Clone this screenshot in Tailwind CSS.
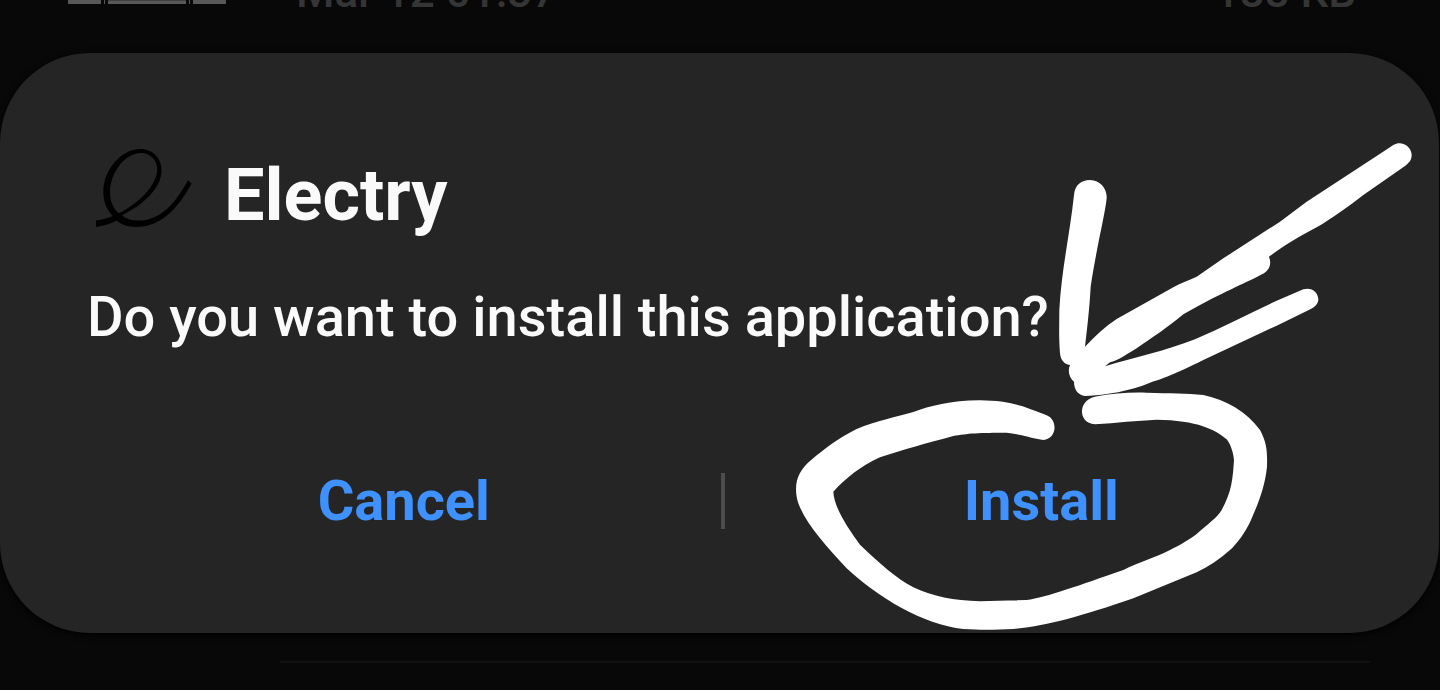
<!DOCTYPE html>
<html lang="en">
<head>
<meta charset="utf-8">
<meta name="viewport" content="width=device-width, initial-scale=1">
<title>Electry</title>
<script src="https://cdn.jsdelivr.net/npm/@tailwindcss/browser@4"></script>
</head>
<body class="min-h-screen overflow-hidden bg-[#080808] font-['Roboto','Noto_Sans',sans-serif]">

  <!-- File row behind the dialog, scrolled almost out of view -->
  <div class="flex h-[53px] items-start pr-[84px] pl-[68px] text-[44px] leading-[48px] font-medium text-[#353535]" aria-hidden="true">
    <div class="flex h-1 w-[158px] gap-[3px]">
      <span class="w-[33px] bg-[#585858]"></span>
      <span class="w-px bg-[#585858]"></span>
      <span class="flex-1 border-t border-[#404040] bg-[#585858]"></span>
      <span class="w-px bg-[#585858]"></span>
      <span class="w-[33px] bg-[#585858]"></span>
    </div>
    <div class="-mt-8 ml-[70px] flex flex-1 justify-between">
      <span>Mar 12 01:37</span>
      <span>188 KB</span>
    </div>
  </div>

  <main role="dialog" aria-labelledby="title" aria-describedby="question" class="relative mr-px rounded-[90px] bg-[#252525] pt-24 pr-[81px] pb-[84px] pl-[87px] shadow-[0_2px_6px_#000]">
    <header class="flex items-start gap-8">
      <svg class="ml-[9px] h-[78px] w-24 shrink-0" viewBox="50 57 287 233" fill="#000" fill-rule="evenodd" aria-hidden="true">
        <path d="M50 271C70 268 85 264 100 257C82 240 72 215 72 185C72 120 125 57 183 57C220 57 246 85 246 120C246 175 190 225 128 255C140 266 155 271 175 271C245 271 290 215 325 150L336 160C300 225 250 290 170 290C145 290 125 283 112 271C92 282 70 288 50 290ZM118 249C175 222 233 165 233 118C233 90 212 69 185 69C135 69 92 130 92 185C92 215 102 236 118 249Z"/>
      </svg>
      <h1 id="title" class="text-[72px] leading-[94px] font-bold text-[#fafafa]">Electry</h1>
    </header>

    <p id="question" class="mt-[42px] text-[56px] leading-[64px] font-medium whitespace-nowrap text-[#fafafa]">Do you want to install this application?</p>

    <div class="mt-[104px] flex items-center">
      <button type="button" class="h-24 flex-1 text-[56px] leading-[64px] font-bold text-[#3e91ff]">Cancel</button>
      <span class="h-14 w-1 bg-[#4d4d4d]"></span>
      <button type="button" class="h-24 flex-1 text-[56px] leading-[64px] font-bold text-[#3e91ff]">Install</button>
    </div>

    <!-- Hand-drawn arrow and ring over the Install button -->
    <svg class="pointer-events-none absolute top-0 right-0 h-[580px] w-[659px]" viewBox="780 53 659 580" fill="#fff" aria-hidden="true">
      <g transform="translate(1040 130) scale(.33333)">
        <path d="M102 195C104 165 125 150 150 150C182 150 202 178 200 205C195 255 170 350 152 470C148 540 142 590 135 650L135 705L90 705C72 703 62 690 60 670C56 620 58 580 58 540C64 420 90 310 102 195Z"/>
        <path d="M135 650C165 618 195 590 230 567L400 472C420 460 445 452 470 440L550 385L720 275L800 215L1010 78L1060 45C1085 30 1115 50 1115 75C1115 90 1108 98 1095 108L970 195C930 226 875 266 830 292C780 318 735 345 687 380C695 400 690 418 672 430C600 468 560 480 430 553C380 595 340 620 290 655C250 680 225 695 210 697L195 709C290 680 370 665 465 628C550 590 630 550 710 512L790 478C815 470 836 488 835 510C833 525 822 533 805 541L710 587L490 690C400 735 370 745 330 758C270 783 200 795 135 798C115 795 102 780 102 755C88 745 82 722 90 705Z"/>
      </g>
      <g transform="translate(780 380) scale(.33333)">
        <path d="M800 106C834 120 832 176 790 180C740 172 710 160 680 158C600 158 560 160 520 168C440 190 370 208 300 232C240 260 200 292 160 335C162 380 200 440 240 494C300 552 350 595 400 622C460 650 520 662 600 664L740 660C800 652 900 615 1030 570C1080 545 1120 535 1170 510C1200 495 1230 478 1250 462C1285 430 1310 415 1325 390C1355 335 1358 300 1362 240C1360 215 1350 190 1340 178C1310 150 1250 120 1130 119C1070 122 1010 128 945 133C915 130 905 110 906 92C907 70 925 52 955 48C1000 40 1050 36 1100 38C1170 40 1220 40 1270 45C1340 60 1400 95 1440 150C1462 190 1462 220 1461 260C1455 320 1435 370 1412 422C1395 458 1372 490 1350 510C1320 537 1285 560 1250 577L1060 655C900 710 800 738 700 747C640 750 600 750 550 747C430 735 290 650 200 565C130 490 60 410 50 350C42 300 60 270 90 243C140 200 180 172 230 147C290 122 350 110 400 96C450 78 510 62 600 61C690 62 730 78 800 106Z"/>
      </g>
    </svg>
  </main>

  <hr class="mt-7 mr-[70px] ml-[280px] h-0.5 border-0 bg-[#111111]">
</body>
</html>
